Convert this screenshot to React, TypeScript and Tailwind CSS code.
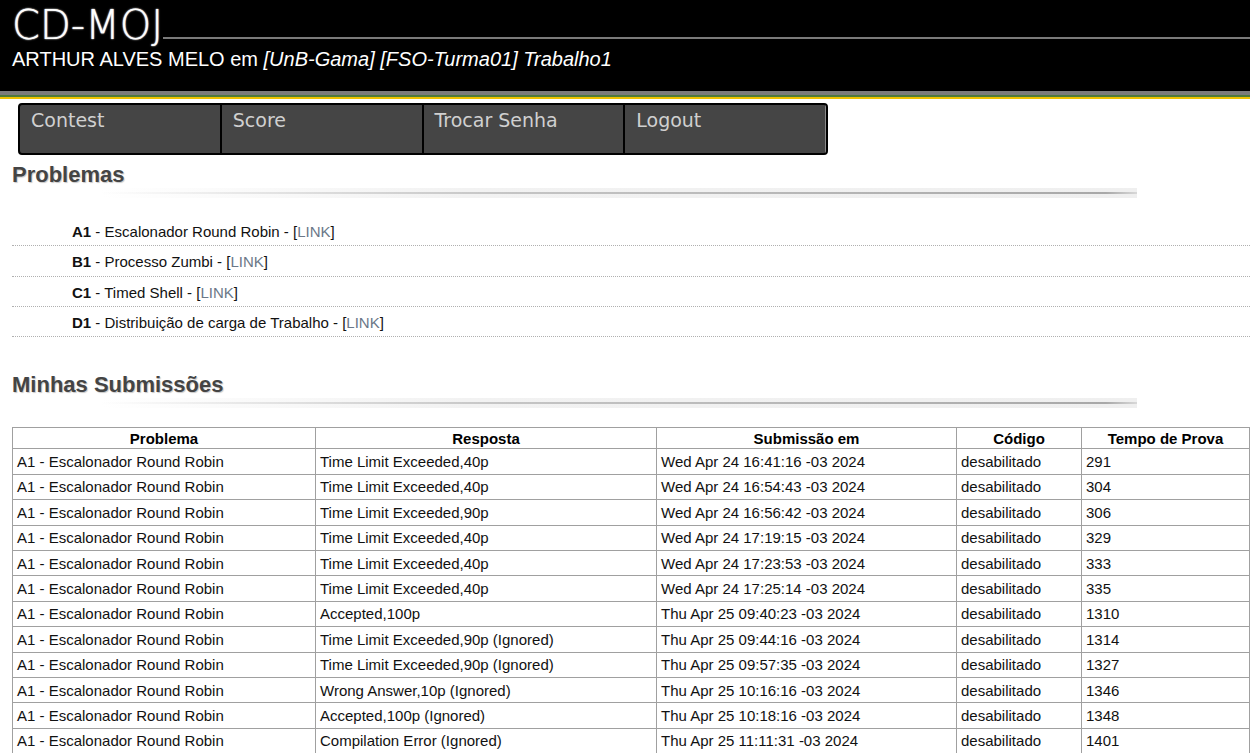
import React from "react";

const problems = [
  ["A1", "Escalonador Round Robin"],
  ["B1", "Processo Zumbi"],
  ["C1", "Timed Shell"],
  ["D1", "Distribuição de carga de Trabalho"],
];

const rows: [string, string, string, string][] = [
  ["Time Limit Exceeded,40p", "Wed Apr 24 16:41:16 -03 2024", "desabilitado", "291"],
  ["Time Limit Exceeded,40p", "Wed Apr 24 16:54:43 -03 2024", "desabilitado", "304"],
  ["Time Limit Exceeded,90p", "Wed Apr 24 16:56:42 -03 2024", "desabilitado", "306"],
  ["Time Limit Exceeded,40p", "Wed Apr 24 17:19:15 -03 2024", "desabilitado", "329"],
  ["Time Limit Exceeded,40p", "Wed Apr 24 17:23:53 -03 2024", "desabilitado", "333"],
  ["Time Limit Exceeded,40p", "Wed Apr 24 17:25:14 -03 2024", "desabilitado", "335"],
  ["Accepted,100p", "Thu Apr 25 09:40:23 -03 2024", "desabilitado", "1310"],
  ["Time Limit Exceeded,90p (Ignored)", "Thu Apr 25 09:44:16 -03 2024", "desabilitado", "1314"],
  ["Time Limit Exceeded,90p (Ignored)", "Thu Apr 25 09:57:35 -03 2024", "desabilitado", "1327"],
  ["Wrong Answer,10p (Ignored)", "Thu Apr 25 10:16:16 -03 2024", "desabilitado", "1346"],
  ["Accepted,100p (Ignored)", "Thu Apr 25 10:18:16 -03 2024", "desabilitado", "1348"],
  ["Compilation Error (Ignored)", "Thu Apr 25 11:11:31 -03 2024", "desabilitado", "1401"],
  ["Accepted,100p (Ignored)", "Thu Apr 25 11:20:02 -03 2024", "desabilitado", "1410"],
  ["Accepted,100p (Ignored)", "Thu Apr 25 11:31:45 -03 2024", "desabilitado", "1421"],
];

function Divider() {
  return (
    <div className="ml-[88px] mt-[1px] w-[1037px] py-[4px] bg-[linear-gradient(to_right,rgba(240,240,240,0),#f2f2f2_35%,#efefef)]">
      <div className="h-[2px] bg-[linear-gradient(to_right,rgba(180,180,180,0),#c4c4c4_40%,#a8a8a8_97%,#d8d8d8)]" />
    </div>
  );
}

export default function App() {
  const menu = ["Contest", "Score", "Trocar Senha", "Logout"];
  return (
    <div className="w-[1250px] h-[753px] overflow-hidden bg-white font-['Liberation_Sans',Arial,sans-serif] text-black">
      <header className="h-[91px] bg-black pl-[12px] pt-[6px]">
        <div className="flex h-[39px]">
          <span className="font-['DejaVu_Sans_ExtraLight','DejaVu_Sans',sans-serif] font-extralight text-[40px] leading-[39px] tracking-[0px] text-white [text-shadow:0_0_2px_#bbb,0_0_1px_#fff]">
            CD-MOJ
          </span>
          <div className="mt-[31px] h-[2px] flex-1 bg-[#7a7a7a]" />
        </div>
        <div className="mt-[3px] text-[20px] leading-[23px] text-white">
          ARTHUR ALVES MELO em <i>[UnB-Gama] [FSO-Turma01] Trabalho1</i>
        </div>
      </header>
      <div className="h-[4px] bg-[#7b7b7b]" />
      <div className="h-[2px] bg-[#4e7a3c]" />
      <div className="h-[2px] bg-[#efc200]" />

      <nav className="mt-[4px] ml-[18px] w-[810px] h-[52px] border-2 border-black rounded-[4px] bg-[#454545] flex overflow-hidden">
        {menu.map((m, i) => (
          <div
            key={m}
            className={
              "flex-1 pl-[11px] pt-[4px] font-['DejaVu_Sans',sans-serif] text-[19px] leading-[22px] text-[#d0d0d0] " +
              (i > 0 ? "border-l-2 border-black " : "") +
              (i === 3 ? "border-r border-r-[#8a8a8a]" : "")
            }
          >
            {m}
          </div>
        ))}
      </nav>

      <div className="pl-[12px]">
        <h2 className="mt-[7px] text-[22px] leading-[25px] font-bold text-[#444] [text-shadow:1px_1px_1px_#c8c8c8]">
          Problemas
        </h2>
        <Divider />
        <ul className="mt-[18px]">
          {problems.map(([id, name]) => (
            <li
              key={id}
              className="h-[30.33px] border-b border-dotted border-[#b0b0b0] pl-[60px] pt-[7px] text-[15px] leading-[17px] text-[#111]"
            >
              <b>{id}</b> - {name} - [<span className="text-[#6b7888]">LINK</span>]
            </li>
          ))}
        </ul>

        <h2 className="mt-[35px] text-[22px] leading-[25px] font-bold text-[#444] [text-shadow:1px_1px_1px_#c8c8c8]">
          Minhas Submissões
        </h2>
        <Divider />

        <table className="mt-[19px] table-fixed border-collapse w-[1237px] text-[15px] leading-[17px] text-[#111]">
          <colgroup>
            <col className="w-[303px]" />
            <col className="w-[341px]" />
            <col className="w-[300px]" />
            <col className="w-[125px]" />
            <col className="w-[168px]" />
          </colgroup>
          <thead>
            <tr>
              {["Problema", "Resposta", "Submissão em", "Código", "Tempo de Prova"].map((h) => (
                <th key={h} className="border border-[#a0a0a0] px-[4px] py-[1.5px] font-bold text-center text-black">
                  {h}
                </th>
              ))}
            </tr>
          </thead>
          <tbody>
            {rows.map((r, i) => (
              <tr key={i}>
                <td className="border border-[#a0a0a0] px-[4px] py-[3.71px] whitespace-nowrap">A1 - Escalonador Round Robin</td>
                {r.map((c, j) => (
                  <td key={j} className="border border-[#a0a0a0] px-[4px] py-[3.71px] whitespace-nowrap">
                    {c}
                  </td>
                ))}
              </tr>
            ))}
          </tbody>
        </table>
      </div>
    </div>
  );
}
